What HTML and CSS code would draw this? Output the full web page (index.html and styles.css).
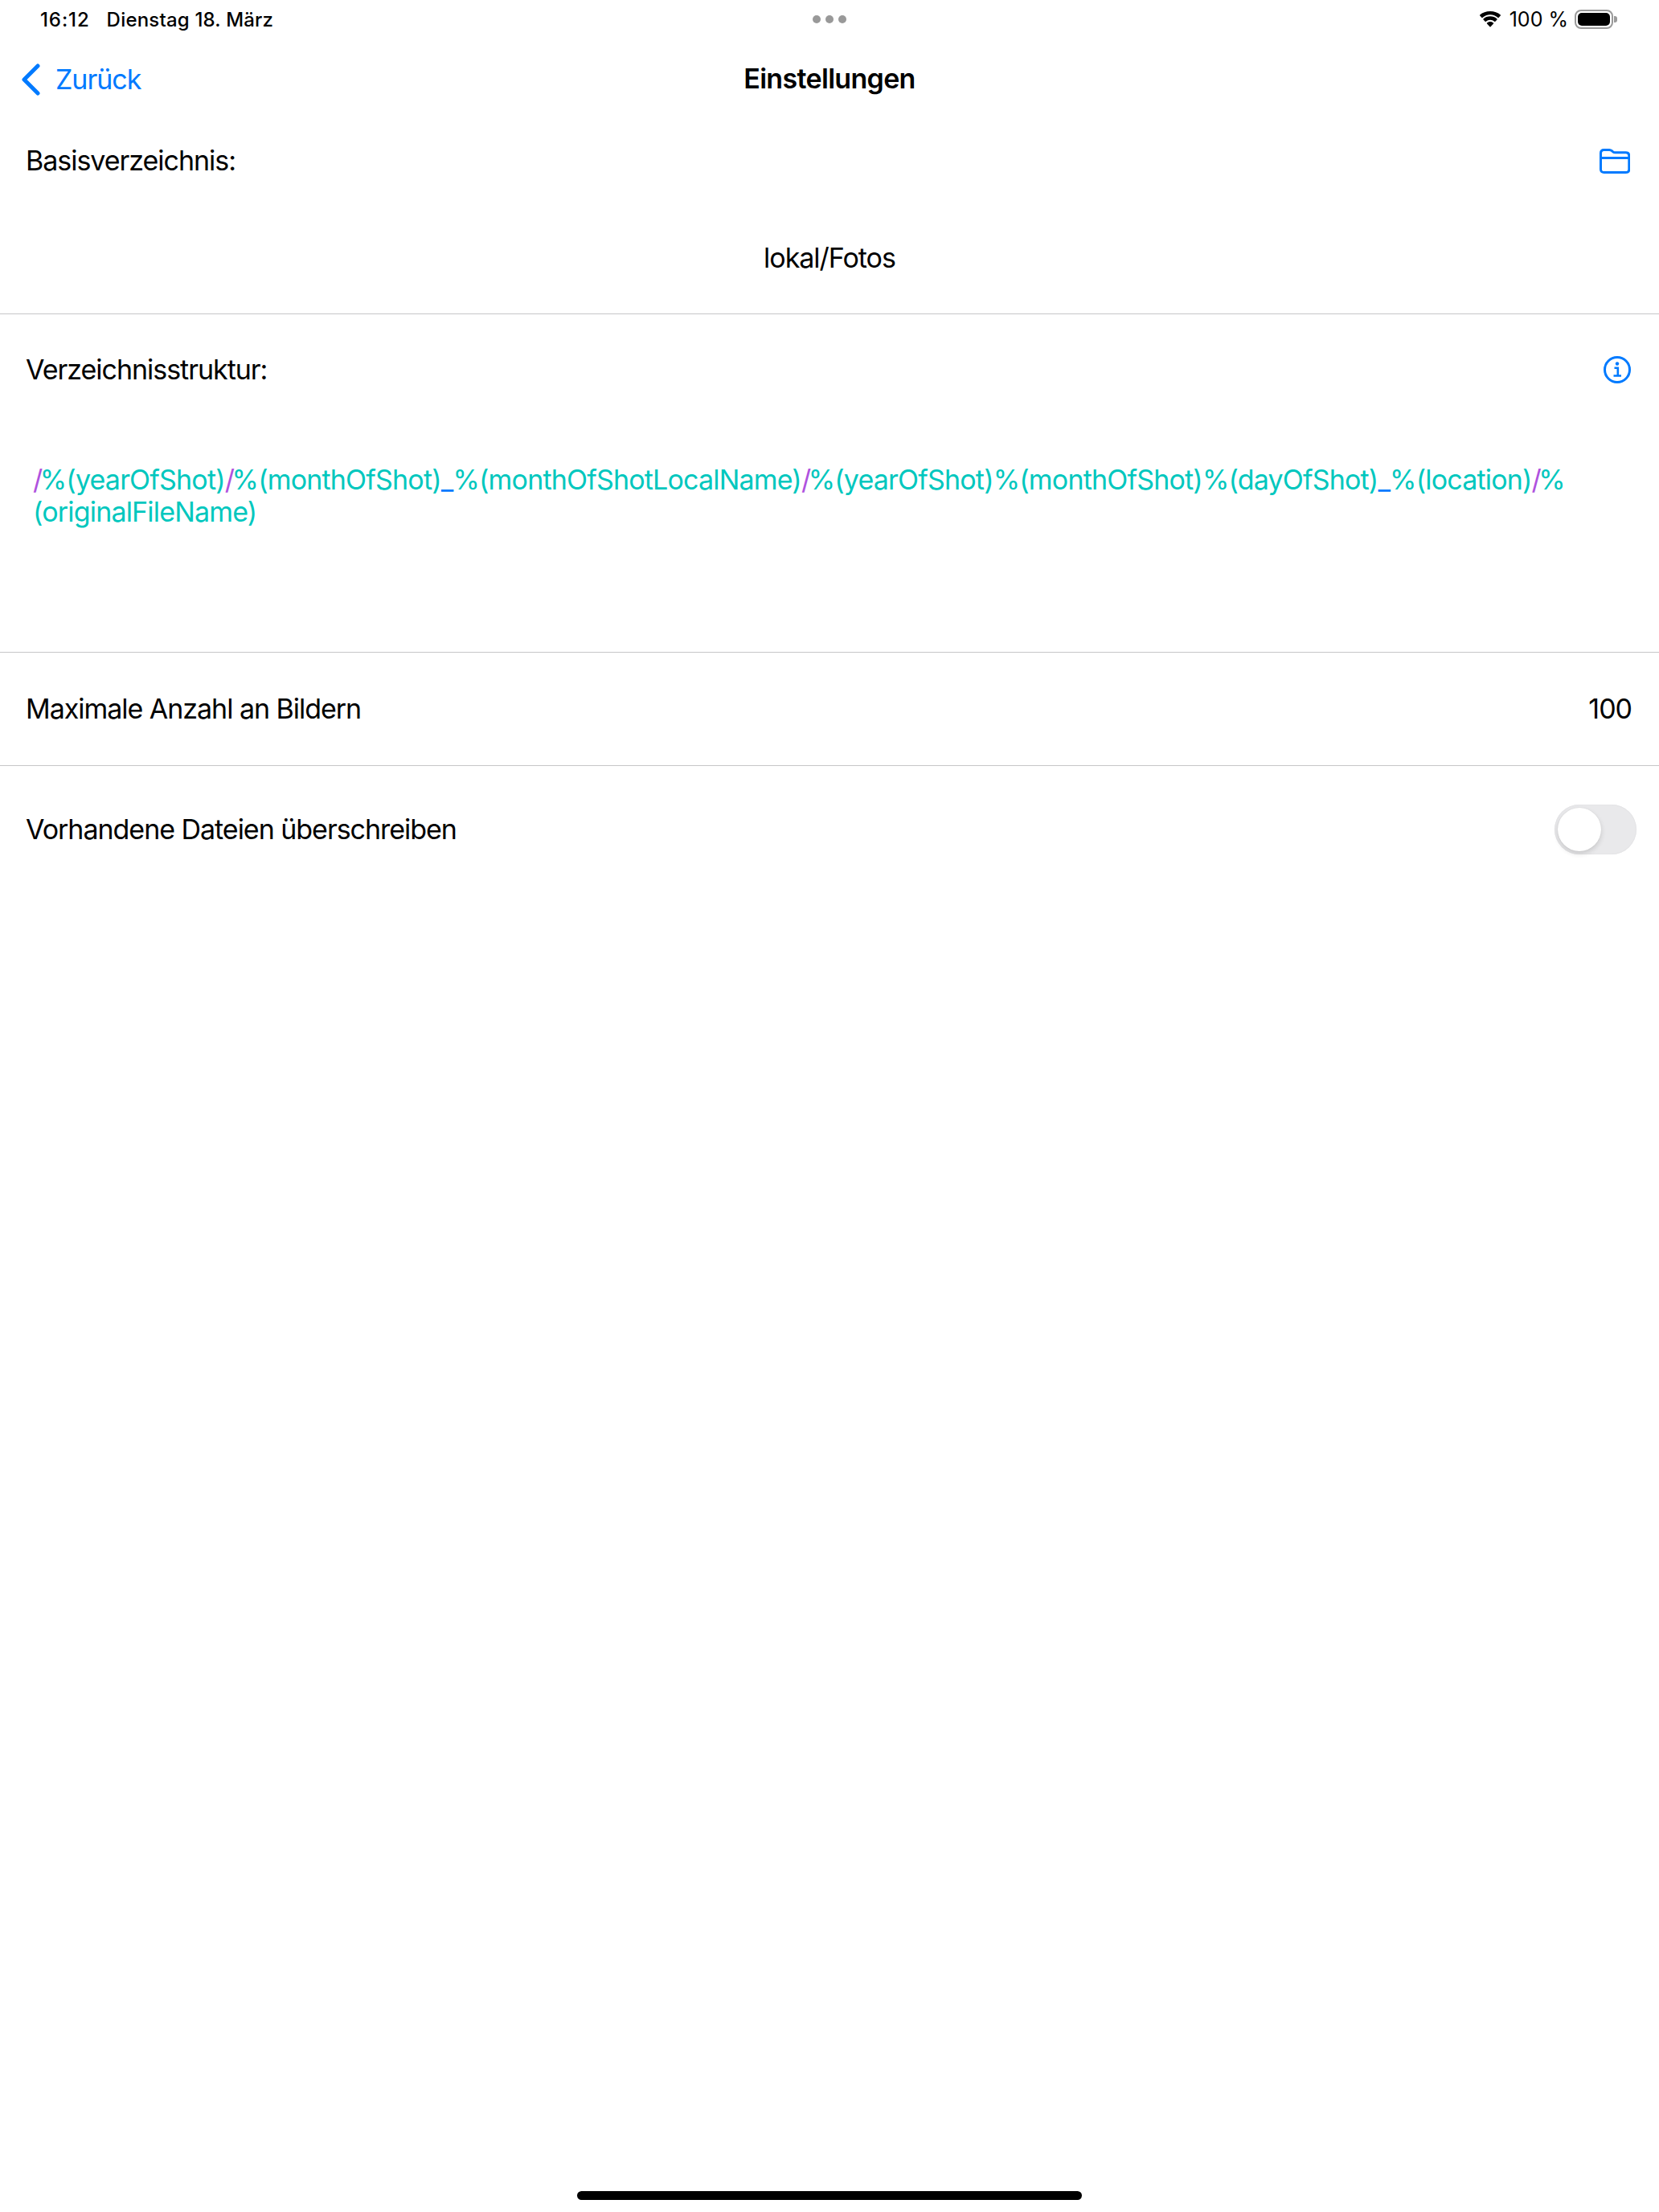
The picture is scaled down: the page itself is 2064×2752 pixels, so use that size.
FILE: index.html
```html
<!DOCTYPE html>
<html lang="de">
<head>
<meta charset="utf-8">
<title>Einstellungen</title>
<link rel="stylesheet" href="styles.css">
</head>
<body>
<div class="page">
  <header class="status">
    <div class="status-left"><span class="time">16:12</span><span>Dienstag 18. März</span></div>
    <div class="dots"><i></i><i></i><i></i></div>
    <div class="status-right">
      <svg class="wifi" viewBox="0 0 28 20" width="28" height="20"><path d="M14 4.2c3.7 0 7 1.400 9.600 3.800.3.200.6.200.9-.1l2.300-2.300c.3-.3.3-.7 0-1C23.600 1.500 19 0 14 0S4.400 1.500 1.200 4.600c-.3.300-.3.700 0 1l2.300 2.300c.3.300.6.300.9.100C7 5.600 10.300 4.200 14 4.200z"/><path d="M14 10.800c2 0 3.900.8 5.300 2 .3.300.7.300 1-.1l2.200-2.200c.3-.3.3-.7 0-1C20.300 7.500 17.300 6.300 14 6.300s-6.300 1.200-8.500 3.200c-.3.300-.3.700 0 1l2.200 2.200c.3.400.7.400 1 .1 1.400-1.200 3.300-2 5.300-2z"/><path d="M14 13c-1.600 0-3 .6-4 1.600-.3.300-.3.700 0 1l3.500 3.700c.3.300.7.300 1 0l3.500-3.700c.3-.3.3-.7 0-1-1-1-2.400-1.600-4-1.600z"/></svg>
      <span class="pct">100 %</span>
      <div class="battery"><div class="battery-body"><div class="battery-fill"></div></div><div class="battery-nub"></div></div>
    </div>
  </header>

  <nav class="nav">
    <div class="back">
      <svg class="chevron" viewBox="0 0 24 40" width="24" height="40"><path d="M21 3 4 20l17 17" fill="none" stroke="#007aff" stroke-width="5" stroke-linecap="round" stroke-linejoin="round"/></svg>
      <span>Zurück</span>
    </div>
    <h1 class="title">Einstellungen</h1>
  </nav>

  <section class="group group-base">
    <div class="row-head head-base">
      <span>Basisverzeichnis:</span>
      <svg class="folder" viewBox="0 0 38 31" width="38" height="31"><path d="M5.500 1.500h6.700c1.300 0 2.200.4 3.200 1.200l1 .9c1 .8 1.900 1.200 3.200 1.200h13c2.700 0 4.200 1.500 4.200 4.100v16.500c0 2.700-1.500 4.100-4.200 4.100H5.600c-2.700 0-4.100-1.400-4.100-4.100V5.500c0-2.600 1.400-4 4-4zM1.500 11.500h35" fill="none" stroke="#007aff" stroke-width="3"/></svg>
    </div>
    <div class="path">lokal/Fotos</div>
  </section>

  <section class="group group-structure">
    <div class="row-head head-structure">
      <span>Verzeichnisstruktur:</span>
      <svg class="info" viewBox="0 0 34 34" width="34" height="34"><circle cx="17" cy="17" r="15.500" fill="none" stroke="#007aff" stroke-width="3"/><circle cx="17" cy="9.500" r="2.200" fill="#007aff"/><path d="M13.500 14.800h4.300v9.200M12.500 24.500h9.500" fill="none" stroke="#007aff" stroke-width="2.600"/></svg>
    </div>
    <p class="pattern"><span class="sl">/</span>%(yearOfShot)<span class="sl">/</span>%(monthOfShot)<span class="us">_</span>%(monthOfShotLocalName)<span class="sl">/</span>%(yearOfShot)%(monthOfShot)%(dayOfShot)<span class="us">_</span>%(location)<span class="sl">/</span>%<br>(originalFileName)</p>
  </section>

  <section class="row row-max">
    <span class="lift">Maximale Anzahl an Bildern</span>
    <span class="value lift">100</span>
  </section>

  <section class="row row-overwrite">
    <span class="lift">Vorhandene Dateien überschreiben</span>
    <div class="switch"><div class="knob"></div></div>
  </section>

  <div class="home"></div>
</div>
</body>
</html>
```

FILE: styles.css
```css
* { box-sizing: border-box; }
html, body { margin: 0; padding: 0; background: #fff; }
body { font-family: Inter, "Liberation Sans", sans-serif; color: #000; }
.page { width: 2064px; height: 2752px; display: flex; flex-direction: column; overflow: hidden; font-size: 34px; font-weight: 380; letter-spacing: -1.03px; }

.status { height: 48px; display: grid; grid-template-columns: 1fr auto 1fr; align-items: center; padding: 0 52px 0 50px; font-size: 24px; letter-spacing: 0.2px; }
.status-left { display: flex; gap: 21px; font-weight: 500; }
.time { letter-spacing: 0.9px; }
.dots { display: flex; gap: 6px; margin-left: 1px; }
.dots i { width: 10px; height: 10px; border-radius: 50%; background: #999; }
.status-right { display: flex; align-items: center; justify-content: flex-end; gap: 10px; }
.pct { font-size: 25px; margin-right: -2px; letter-spacing: 0; }
.wifi { fill: #000; margin-left: 2px; }
.battery { display: flex; align-items: center; gap: 1px; }
.battery-body { width: 48px; height: 24px; border: 2px solid #9a9a9a; border-radius: 8px; padding: 2px; }
.battery-fill { width: 100%; height: 100%; background: #000; border-radius: 5px; }
.battery-nub { width: 4px; height: 8px; background: #9a9a9a; border-radius: 0 3px 3px 0; }

.nav { height: 100px; position: relative; display: flex; align-items: center; justify-content: center; }
.back { position: absolute; left: 26px; top: 30px; display: flex; align-items: center; gap: 19px; color: #007aff; }
.title { margin: 0 0 1px; font-size: 34px; font-weight: 600; letter-spacing: -0.68px; }

.group { border-bottom: 1px solid #c6c6c8; }
.group-base { height: 243px; }
.group-structure { height: 421px; }
.row-head { display: flex; justify-content: space-between; align-items: center; padding: 0 36px 0 32px; height: 40px; }
.head-base { margin-top: 31px; }
.head-structure { margin-top: 48px; }
.folder { margin-top: 2px; }
.info { margin: 2px -1px 0 0; }
.path { text-align: center; margin-top: 82px; line-height: 40px; }
.pattern { margin: 98px 100px 0 41px; line-height: 40px; color: #00c7be; white-space: nowrap; letter-spacing: -0.82px; }
.sl { color: #af52de; letter-spacing: -3.5px; }
.us { color: #007aff; }

.row { display: flex; justify-content: space-between; align-items: center; padding: 0 32px; }
.row-max { height: 141px; border-bottom: 1px solid #c6c6c8; }
.row-overwrite { height: 158px; padding-right: 28px; }
.value { margin-right: 2px; }
.lift { padding-bottom: 2px; }

.switch { width: 102px; height: 62px; border-radius: 31px; background: #e9e9eb; padding: 4px; box-shadow: inset 0 0 0 1px #e4e4e6; }
.knob { width: 54px; height: 54px; border-radius: 50%; background: #fff; box-shadow: 0 3px 6px rgba(0,0,0,.14), 0 0 1px rgba(0,0,0,.1); }

.home { width: 628px; height: 11px; border-radius: 6px; background: #000; margin: auto auto 15px; }
```
